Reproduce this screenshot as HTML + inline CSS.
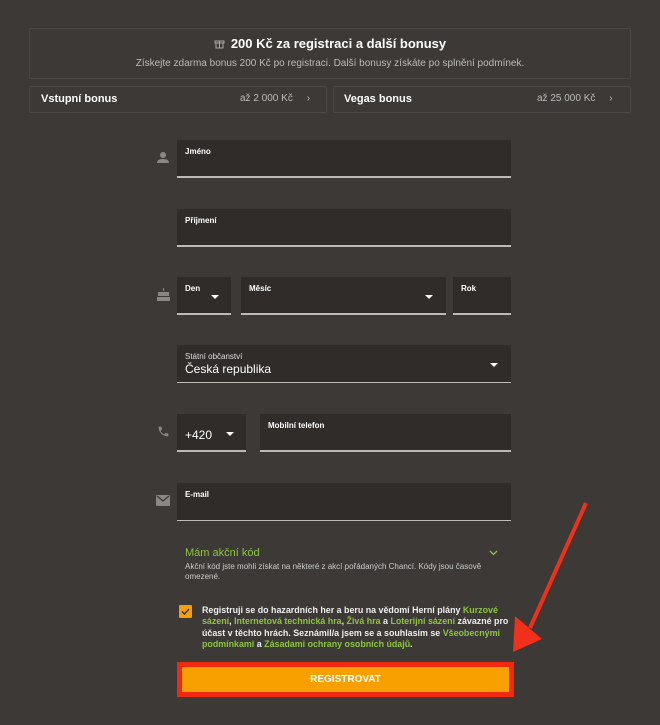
<!DOCTYPE html>
<html><head><meta charset="utf-8"><style>
*{box-sizing:border-box;margin:0;padding:0}
body{width:660px;height:725px;background:#3c3936;font-family:"Liberation Sans",sans-serif;color:#eee;position:relative;overflow:hidden}
.a{position:absolute}
.box{border:1px solid #4a4744;border-radius:2px}
.f{position:absolute;background:#2f2c2a;border-bottom:2px solid #bdbab6}
.f .l{position:absolute;left:8px;top:7px;font-size:8px;color:#fff;font-weight:bold}
.tri{position:absolute;width:0;height:0;border-left:4px solid transparent;border-right:4px solid transparent;border-top:4px solid #fff}
.g{color:#8cc63f}
</style></head><body>
<div class="a box" style="left:29px;top:28px;width:602px;height:51px"></div>
<div class="a" style="left:0;top:36px;width:660px;text-align:center;font-size:13px;font-weight:bold;color:#fff">
<svg width="11" height="11" viewBox="0 0 11 11" style="vertical-align:-1px;margin-right:6px"><rect x="1" y="3" width="9" height="2" fill="none" stroke="#aaa"/><rect x="2" y="5" width="7" height="5" fill="none" stroke="#aaa"/><line x1="5.5" y1="3" x2="5.5" y2="10" stroke="#aaa"/></svg>200 Kč za registraci a další bonusy</div>
<div class="a" style="left:0;top:58px;width:660px;text-align:center;font-size:10px;color:#bbb">Získejte zdarma bonus 200 Kč po registraci. Další bonusy získáte po splnění podmínek.</div>
<div class="a box" style="left:29px;top:86px;width:298px;height:27px"></div>
<div class="a box" style="left:333px;top:86px;width:298px;height:27px"></div>
<div class="a" style="left:41px;top:93px;font-size:11px;font-weight:bold;color:#fff">Vstupní bonus</div>
<div class="a" style="left:240px;top:93px;font-size:10px;color:#bbb">až 2 000 Kč &nbsp;&nbsp;&nbsp;&nbsp;›</div>
<div class="a" style="left:344px;top:93px;font-size:11px;font-weight:bold;color:#fff">Vegas bonus</div>
<div class="a" style="left:537px;top:93px;font-size:10px;color:#bbb">až 25 000 Kč &nbsp;&nbsp;&nbsp;&nbsp;›</div>

<svg class="a" style="left:157px;top:151px" width="12" height="13" viewBox="0 0 12 13"><circle cx="6" cy="4" r="3" fill="#8a8784"/><path d="M0 12 Q0 8 6 8 Q12 8 12 12Z" fill="#8a8784"/></svg>
<div class="f" style="left:177px;top:140px;width:334px;height:38px"><div class="l">Jméno</div></div>
<div class="f" style="left:177px;top:209px;width:334px;height:38px"><div class="l">Příjmení</div></div>

<svg class="a" style="left:157px;top:288px" width="13" height="13" viewBox="0 0 13 13"><rect x="6" y="0" width="1" height="3" fill="#8a8784"/><rect x="1" y="4" width="11" height="4" fill="#8a8784"/><rect x="0" y="9" width="13" height="4" fill="#8a8784"/></svg>
<div class="f" style="left:177px;top:277px;width:54px;height:38px"><div class="l">Den</div><div class="tri" style="left:34px;top:18px"></div></div>
<div class="f" style="left:241px;top:277px;width:205px;height:38px"><div class="l">Měsíc</div><div class="tri" style="left:184px;top:18px"></div></div>
<div class="f" style="left:453px;top:277px;width:58px;height:38px"><div class="l">Rok</div></div>

<div class="f" style="left:177px;top:345px;width:334px;height:38px;border-bottom:1px solid #bdbab6"><div class="l" style="color:#ddd;font-weight:normal">Státní občanství</div><div class="a" style="left:8px;top:17px;font-size:12px;color:#fff">Česká republika</div><div class="tri" style="left:313px;top:18px"></div></div>

<svg class="a" style="left:157px;top:425px" width="13" height="13" viewBox="0 0 24 24"><path d="M6.6 10.8c1.4 2.8 3.8 5.1 6.6 6.6l2.2-2.2c.3-.3.7-.4 1-.2 1.1.4 2.300.6 3.6.6.6 0 1 .4 1 1V20c0 .6-.4 1-1 1C10.6 21 3 13.4 3 4c0-.6.4-1 1-1h3.5c.6 0 1 .4 1 1 0 1.3.2 2.5.6 3.6.1.3 0 .7-.2 1z" fill="#8a8784"/></svg>
<div class="f" style="left:177px;top:414px;width:69px;height:38px"><div class="a" style="left:8px;top:14px;font-size:12px;color:#fff">+420</div><div class="tri" style="left:49px;top:18px"></div></div>
<div class="f" style="left:260px;top:414px;width:251px;height:38px"><div class="l">Mobilní telefon</div></div>

<svg class="a" style="left:156px;top:495px" width="14" height="11" viewBox="0 0 14 11"><rect width="14" height="11" rx="1" fill="#8a8784"/><path d="M1 1 L7 6 L13 1" stroke="#3c3936" stroke-width="1.3" fill="none"/></svg>
<div class="f" style="left:177px;top:483px;width:334px;height:38px;border-bottom:1px solid #bdbab6"><div class="l">E-mail</div></div>

<div class="a g" style="left:185px;top:547px;font-size:11px">Mám akční kód</div>
<svg class="a" style="left:489px;top:550px" width="9" height="6" viewBox="0 0 9 6"><path d="M1 1 L4.5 4.5 L8 1" stroke="#8cc63f" stroke-width="1.3" fill="none"/></svg>
<div class="a" style="left:185px;top:562px;width:320px;font-size:8px;line-height:10px;color:#ccc">Akční kód jste mohli získat na některé z akcí pořádaných Chancí. Kódy jsou časově omezené.</div>

<div class="a" style="left:179px;top:605px;width:13px;height:13px;background:#f5a000;border-radius:1px"><svg width="13" height="13" viewBox="0 0 13 13"><path d="M3 6.5 L5.5 9 L10 4" stroke="#3c3936" stroke-width="1.5" fill="none"/></svg></div>
<div class="a" style="left:202px;top:605px;width:320px;font-size:8.9px;line-height:11.3px;font-weight:bold;color:#eee;white-space:nowrap">Registruji se do hazardních her a beru na vědomí Herní plány <span class="g">Kurzové</span><br><span class="g">sázení</span>, <span class="g">Internetová technická hra</span>, <span class="g">Živá hra</span> a <span class="g">Loterijní sázení</span> závazné pro<br>účast v těchto hrách. Seznámil/a jsem se a souhlasím se <span class="g">Všeobecnými</span><br><span class="g">podmínkami</span> a <span class="g">Zásadami ochrany osobních údajů</span>.</div>

<div class="a" style="left:177px;top:662px;width:337px;height:35px;background:#f02a10"></div>
<div class="a" style="left:182px;top:667px;width:327px;height:25px;background:#f7a000;color:#fff;font-weight:bold;font-size:10px;text-align:center;line-height:25px">REGISTROVAT</div>

<svg class="a" style="left:0;top:0" width="660" height="725"><line x1="586" y1="503" x2="530" y2="628" stroke="#f0301a" stroke-width="4"/><polygon points="513,652 515,616 542,639" fill="#f0301a"/></svg>
</body></html>
